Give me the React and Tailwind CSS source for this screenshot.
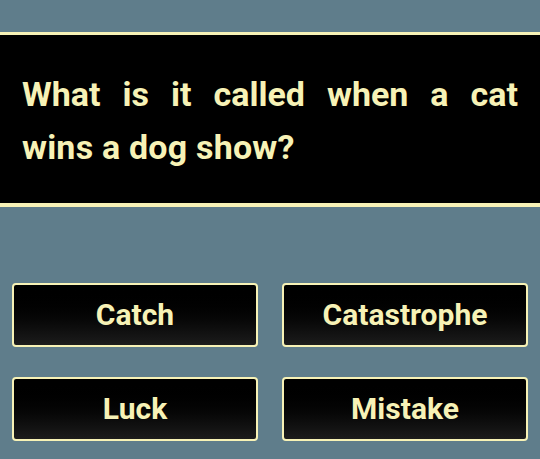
export default function App() {
  const answers = ["Catch", "Catastrophe", "Luck", "Mistake"];
  return (
    <div
      className="w-[540px] h-[459px] bg-[#5f7d8b] overflow-hidden pt-[32px]"
      style={{ fontFamily: "Roboto, 'Liberation Sans', sans-serif" }}
    >
      <div className="bg-black border-t-[3px] border-b-[4px] border-[#f7f2b6] pt-[33px] pb-[29px] px-[22px]">
        <p className="text-[#f7f2b6] font-bold text-[34px] leading-[53px] text-justify">
          <span className="block [text-align-last:justify]">What is it called when a cat</span>
          <span className="block tracking-[0.2px]">wins a dog show?</span>
        </p>
      </div>
      <div className="grid grid-cols-2 gap-x-[24px] gap-y-[30px] px-[12px] mt-[76px]">
        {answers.map((a) => (
          <div
            key={a}
            className="h-[64px] rounded-[4px] border-[2px] border-[#f7f2b6] bg-gradient-to-b from-black to-[#1c1c1c] flex items-center justify-center"
          >
            <span className="text-[#f7f2b6] font-bold text-[30px] leading-none">{a}</span>
          </div>
        ))}
      </div>
    </div>
  );
}
